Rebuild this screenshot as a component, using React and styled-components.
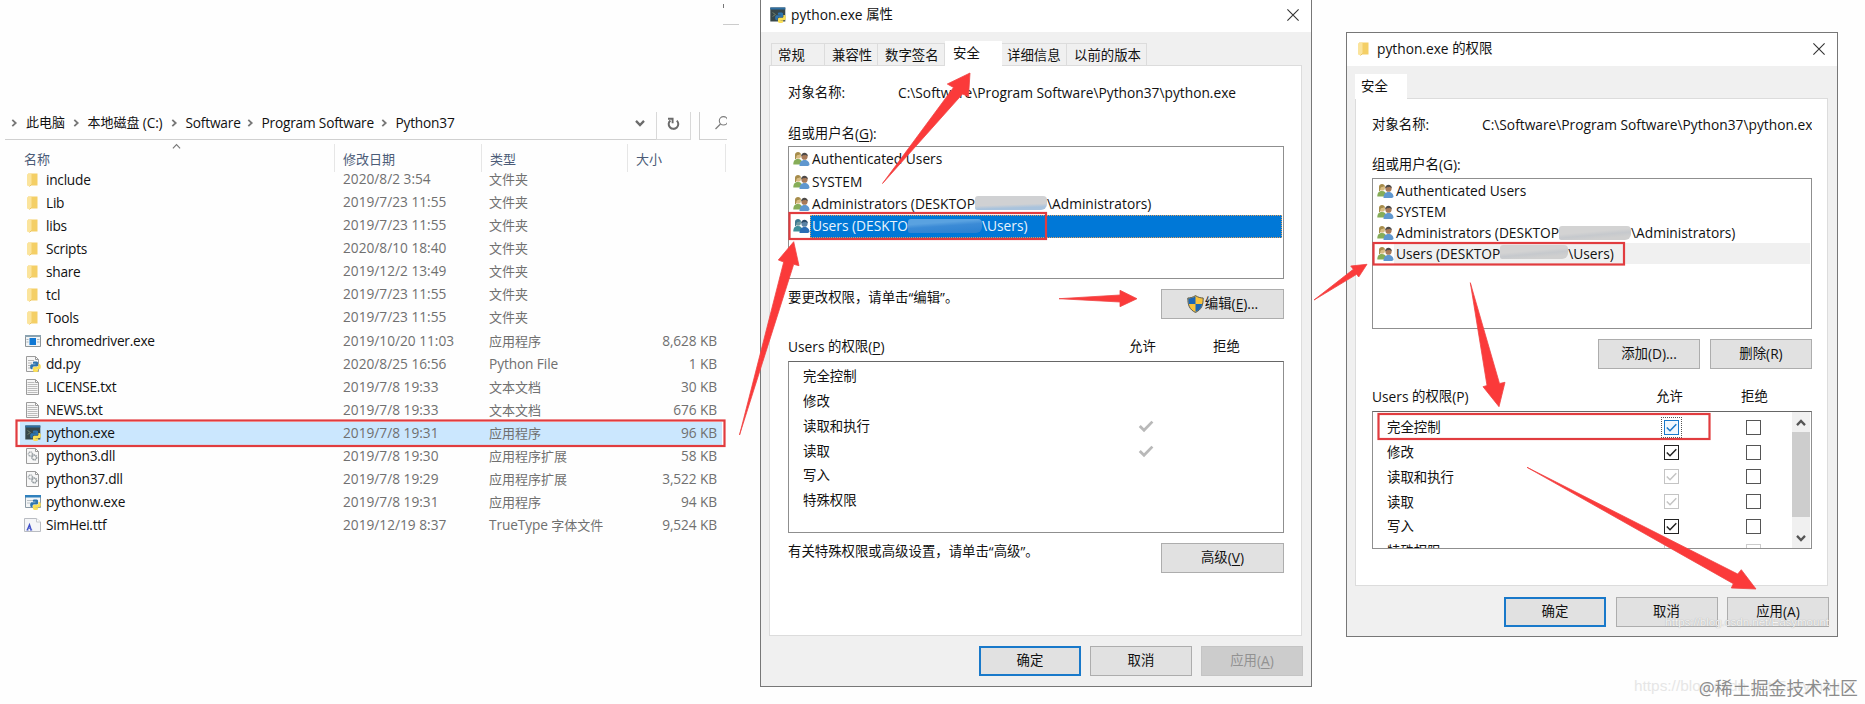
import React from "react";
import styled, { createGlobalStyle, css } from "styled-components";

const Global = createGlobalStyle`
  *, *::before, *::after { box-sizing: border-box; }
  body { margin: 0; background: #fff; }
`;

const Page = styled.main`
  position: relative;
  display: flex;
  align-items: flex-start;
  width: 1865px;
  height: 704px;
  overflow: hidden;
  background: #fefefe;
  color: #111;
  font-family: "Open Sans", "Noto Sans CJK SC", sans-serif;
  font-size: 13.7px;
`;

/* ---------- text ---------- */

const Line = styled.span`
  white-space: pre;
  letter-spacing: ${(p) => p.$ls ?? 0}px;
`;
const Cjk = styled.span`
  font-family: "Noto Sans CJK SC", sans-serif;
  font-size: ${(p) => p.$size}px;
  letter-spacing: 0;
  line-height: 0;
  vertical-align: ${(p) => p.$lift}px;
`;
const Key = styled.span`
  text-decoration: underline;
  text-underline-offset: 2px;
`;

/* Han text is set slightly smaller than Latin; "&X" underlines an access key. */
function Txt({ children, cjk = 13.4, ls, lift = 1 }) {
  return (
    <Line $ls={ls}>
      {children.split(/([\u2e80-\uffef]+|&\w)/).map((part, i) => {
        if (/^[\u2e80-\uffef]/.test(part)) return <Cjk key={i} $size={cjk} $lift={lift}>{part}</Cjk>;
        if (part.startsWith("&")) return <Key key={i}>{part[1]}</Key>;
        return part;
      })}
    </Line>
  );
}

/* ---------- icons ---------- */

const Svg = styled.svg`
  display: block;
  flex: none;
  overflow: ${(p) => (p.$clip ? "hidden" : "visible")};
`;

const SNAKE_TOP =
  "M14.25.18l.9.2.73.26.59.3.45.32.34.34.25.34.16.33.1.3.04.26.02.2-.01.13V8.5l-.05.63-.13.55-.21.46-.26.38-.3.31-.33.25-.35.19-.35.14-.33.1-.3.07-.26.04-.21.02H8.77l-.69.05-.59.14-.5.22-.41.27-.33.32-.27.35-.2.36-.15.37-.1.35-.07.32-.04.27-.02.21v3.06H3.17l-.21-.03-.28-.07-.32-.12-.35-.18-.36-.26-.36-.36-.35-.46-.32-.59-.28-.73-.21-.88-.14-1.05-.05-1.23.06-1.22.16-1.04.24-.87.32-.71.36-.57.4-.44.42-.33.42-.24.4-.16.36-.1.32-.05.24-.01h.16l.06.01h8.16v-.83H6.18l-.01-2.75-.02-.37.05-.34.11-.31.17-.28.25-.26.31-.23.38-.2.44-.18.51-.15.58-.12.64-.1.71-.06.77-.04.84-.02 1.27.05z";
const SNAKE_BOTTOM =
  "M21.1 6.11l.28.06.32.12.35.18.36.27.36.35.35.47.32.59.28.73.21.88.14 1.04.05 1.23-.06 1.23-.16 1.04-.24.86-.32.71-.36.57-.4.45-.42.33-.42.24-.4.16-.36.09-.32.05-.24.02-.16-.01h-8.22v.82h5.84l.01 2.76.02.36-.05.34-.11.31-.17.29-.25.25-.31.24-.38.2-.44.17-.51.15-.58.13-.64.09-.71.07-.77.04-.84.01-1.27-.04-1.07-.14-.9-.2-.73-.25-.59-.3-.45-.33-.34-.34-.25-.34-.16-.33-.1-.3-.04-.25-.02-.2.01-.13v-5.34l.05-.64.13-.54.21-.46.26-.38.3-.32.33-.24.35-.2.35-.14.33-.1.3-.06.26-.04.21-.02.13-.01h5.84l.69-.05.59-.14.5-.21.41-.28.33-.32.27-.35.2-.36.15-.36.1-.35.07-.32.04-.28.02-.21V6.07h2.09l.14.01z";

const Snake = () => (
  <g transform="translate(5.2 5.4) scale(.44)">
    <path d={SNAKE_TOP} fill="#2f74ae" />
    <path d={SNAKE_BOTTOM} fill="#fbdf55" />
  </g>
);
const Sheet = () => (
  <path d="M1.5.5h9l3 3v12h-12zM10.5.5v3h3" fill="#f7f7f7" stroke="#9b9b9b" />
);
const FolderIcon = () => (
  <Svg width="16" height="16" viewBox="0 0 16 16">
    <path d="M3 1.5h9.500v12H3z" fill="#f4cf66" />
    <path d="M2 2.200l4.500-.7v11L4.500 14.500 2 13.500z" fill="#fbe49c" />
    <path d="M6.500 12.500l-2 2" stroke="#e6bd55" strokeWidth=".8" />
  </Svg>
);
const ChromeDriverIcon = () => (
  <Svg width="16" height="16" viewBox="0 0 16 16">
    <path d="M.5 2.500h15v11H.5z" fill="#f2f4f5" stroke="#8c9499" />
    <path d="M0 2h16v2H0z" fill="#8aa2b0" />
    <path d="M4.500 5h6.500v7H4.500z" fill="#0f78d4" />
    <path d="M1.500 6.500h2M1.500 9h2M12 6.500h2.500M12 9h2.500" stroke="#a9b4bb" />
  </Svg>
);
const PyFileIcon = () => (
  <Svg width="16" height="16" viewBox="0 0 16 16">
    <Sheet />
    <path d="M3 4.500h6M3 7h4M3 9.500h3M3 12h3" stroke="#b5b5b5" />
    <Snake />
  </Svg>
);
const TextFileIcon = () => (
  <Svg width="16" height="16" viewBox="0 0 16 16">
    <Sheet />
    <path d="M2.500 3.500h7M2.500 5.500h10M2.500 7.500h10M2.500 9.500h10M2.500 11.500h10M2.500 13.500h10" stroke="#b4b4b4" strokeWidth=".9" />
  </Svg>
);
const PythonExeIcon = () => (
  <Svg width="16" height="16" viewBox="0 0 16 16">
    <path d="M.3.500h15v14H.3z" fill="#37474a" />
    <path d="M.3.500h15v2H.3z" fill="#2e6fa3" />
    <path d="M2.500 5.500l3 2-3 2" stroke="#6f7f6a" fill="none" />
    <Snake />
  </Svg>
);
const PythonwIcon = () => (
  <Svg width="16" height="16" viewBox="0 0 16 16">
    <path d="M.5 1.500h15v12H.5z" fill="#f3f5f6" stroke="#8b9aa5" />
    <path d="M0 1h16v2.500H0z" fill="#2f80bd" />
    <path d="M2 6.500h6M2 9h3" stroke="#b9c0c5" />
    <Snake />
  </Svg>
);
const DllIcon = () => (
  <Svg width="16" height="16" viewBox="0 0 16 16">
    <Sheet />
    <circle cx="5.500" cy="6" r="2" fill="none" stroke="#a3a9ad" strokeWidth="1.600" strokeDasharray="1.200 .5" />
    <circle cx="9.300" cy="9.500" r="2.300" fill="none" stroke="#8f979c" strokeWidth="1.700" strokeDasharray="1.300 .5" />
  </Svg>
);
const FontFileIcon = () => (
  <Svg width="18" height="16" viewBox="0 0 18 16">
    <path d="M.5 1.500h12l4 3.500v9.500H.5z" fill="#f5f6f8" stroke="#b9bcc2" />
    <path d="M12.500 1.500V5h4" fill="#fff" stroke="#c5c8cc" />
    <path d="M2.500 13h2M6 13h2.200M3.200 13L5.500 7.500 7.300 13M4 11.200h2.500" stroke="#4050c8" strokeWidth="1.200" fill="none" />
  </Svg>
);
const UsersIcon = ({ tint }) => (
  <Svg width="17" height="16" viewBox="0 0 17 16">
    <path d="M.3 13.500C.3 9.500 2 8 5 8s4.500 2 4.500 5.500z" fill={tint ? "#3f8f9a" : "#86ad58"} />
    <circle cx="5" cy="4.700" r="3" fill={tint ? "#6f99a0" : "#d9bd83"} />
    <path d="M2 8V4c0-4 6-4 6 0l-1-.8C6 4.500 4 3.500 3.500 5L3 8z" fill={tint ? "#3d7a90" : "#a68c4b"} />
    <path d="M6.500 15C6.500 11 8.500 9 11.500 9s5 2 5 5l-1.500 1z" fill={tint ? "#2a6db5" : "#5f97cf"} />
    <circle cx="11.500" cy="5.700" r="3.100" fill={tint ? "#5c83a5" : "#a87a58"} />
    <path d="M8.200 5.500c-.3-5 6.800-5 6.600 0-1-1.800-3.600-1-4.400-1.500z" fill={tint ? "#2b4a68" : "#4d4a48"} />
  </Svg>
);
const ShieldIcon = () => (
  <Svg width="17" height="18" viewBox="0 0 17 18">
    <path d="M8.500.6C6 2.300 3.500 3 .8 3c0 7 1.500 11.500 7.700 14.500C14.700 14.500 16.200 10 16.200 3 13.500 3 11 2.300 8.500.6z" fill="#f8c23c" stroke="#5b5b50" />
    <path d="M8.500 1.200C6.200 2.600 4 3.300 1.300 3.500c0 2 .1 3.900.5 5.400h6.700z" fill="#1c66b5" />
    <path d="M8.500 8.900h6.700c-.8 3.900-2.700 6.300-6.700 8z" fill="#1c66b5" />
  </Svg>
);
const CloseIcon = () => (
  <Svg width="12" height="12" viewBox="0 0 12 12">
    <path d="M.4.4l11.200 11.200M11.600.4L.4 11.600" stroke="#333" strokeWidth="1.100" />
  </Svg>
);
const Tick = ({ color, width = 1.500, size = 15 }) => (
  <Svg width={size} height={size} viewBox="0 0 15 15">
    <path d="M2.800 7.500l3.200 3.200 6.300-6.500" fill="none" stroke={color} strokeWidth={width} />
  </Svg>
);
const ChevronIcon = ({ dir = "right", size = 8, color = "#777", width = 1.800 }) => {
  const turn = { right: 0, down: 90, left: 180, up: 270 }[dir];
  return (
    <Svg width={size} height={size} viewBox="0 0 8 8">
      <path d="M2.300.8L5.700 4 2.300 7.200" transform={`rotate(${turn} 4 4)`} fill="none" stroke={color} strokeWidth={width} />
    </Svg>
  );
};
const RefreshIcon = () => (
  <Svg width="13" height="14" viewBox="0 0 13 14">
    <path d="M9.800 3.600A4.800 4.800 0 1 1 3.400 3.400" fill="none" stroke="#6b6b6b" strokeWidth="2" />
    <path d="M1 1.700h4.600V6.300" fill="none" stroke="#6b6b6b" strokeWidth="1.900" />
  </Svg>
);
const SearchIcon = () => (
  <Svg width="12" height="14" viewBox="0 0 12 14" $clip>
    <circle cx="8.500" cy="4.800" r="4.200" fill="none" stroke="#7d7d7d" strokeWidth="1.100" />
    <path d="M5.500 8L.5 13" stroke="#7d7d7d" strokeWidth="1.200" />
  </Svg>
);

/* ---------- file explorer ---------- */

const Explorer = styled.section`
  width: 760px;
  flex: none;
  padding-left: 5px;
`;
const WindowCorner = styled.div`
  width: 16px;
  height: 25px;
  margin: 0 0 87px 718px;
  border-bottom: 1px solid #ccc;
  &::before {
    content: "";
    display: block;
    width: 1px;
    height: 8px;
    border-bottom: 4px solid #777;
  }
`;
const AddressBar = styled.div`
  display: flex;
  height: 28px;
`;
const Crumbs = styled.div`
  display: flex;
  align-items: center;
  width: 651px;
  padding: 0 11px 5px 5px;
  border-bottom: 1px solid #d0d0d0;
  line-height: 20px;
`;
const Crumb = styled.div`
  display: flex;
  align-items: center;
  gap: 8px;
  width: ${(p) => p.$w}px;
`;
const DropArrow = styled.div`
  margin-left: auto;
`;
const AddressButton = styled.div`
  display: flex;
  align-items: center;
  justify-content: center;
  width: 35px;
  padding-bottom: 3px;
  border: solid #d9d9d9;
  border-width: 0 1px 1px;
`;
const SearchBox = styled.div`
  display: flex;
  justify-content: flex-end;
  width: 28px;
  margin-left: 8px;
  padding-top: 4px;
  border: solid #d0d0d0;
  border-width: 0 0 1px 1px;
`;
const HeaderRow = styled.div`
  display: grid;
  grid-template-columns: 311px 147px 146px 98px;
  height: 28.200px;
  padding-left: 19px;
`;
const HeaderCell = styled.div`
  position: relative;
  height: 28px;
  margin-top: 4px;
  border-right: 1px solid #e6e6e6;
  padding-left: ${(p) => (p.$first ? 0 : 8)}px;
  color: #4c5c78;
  line-height: 31px;
`;
const SortMark = styled.span`
  position: absolute;
  left: 148px;
  top: -2px;
`;
const FileRow = styled.div`
  display: grid;
  grid-template-columns: 323px 146px 1fr auto;
  width: 702px;
  height: 23.050px;
  margin-left: 15px;
  padding-right: 5px;
  line-height: 22px;
  color: #707070;
  background: ${(p) => (p.$on ? "#cbe7fe" : "none")};
`;
const FileName = styled.div`
  display: flex;
  align-items: center;
  gap: 5px;
  padding-left: 5px;
  color: #111;
`;
const IconSlot = styled.span`
  display: flex;
  width: 16px;
  flex: none;
  justify-content: center;
`;

const crumbs = [
  ["此电脑", 61.5],
  ["本地磁盘 (C:)", 98],
  ["Software", 76],
  ["Program Software", 134],
  ["Python37", 90],
];
const files = [
  [FolderIcon, "include", "2020/8/2 3:54", "文件夹", ""],
  [FolderIcon, "Lib", "2019/7/23 11:55", "文件夹", ""],
  [FolderIcon, "libs", "2019/7/23 11:55", "文件夹", ""],
  [FolderIcon, "Scripts", "2020/8/10 18:40", "文件夹", ""],
  [FolderIcon, "share", "2019/12/2 13:49", "文件夹", ""],
  [FolderIcon, "tcl", "2019/7/23 11:55", "文件夹", ""],
  [FolderIcon, "Tools", "2019/7/23 11:55", "文件夹", ""],
  [ChromeDriverIcon, "chromedriver.exe", "2019/10/20 11:03", "应用程序", "8,628 KB"],
  [PyFileIcon, "dd.py", "2020/8/25 16:56", "Python File", "1 KB"],
  [TextFileIcon, "LICENSE.txt", "2019/7/8 19:33", "文本文档", "30 KB"],
  [TextFileIcon, "NEWS.txt", "2019/7/8 19:33", "文本文档", "676 KB"],
  [PythonExeIcon, "python.exe", "2019/7/8 19:31", "应用程序", "96 KB"],
  [DllIcon, "python3.dll", "2019/7/8 19:30", "应用程序扩展", "58 KB"],
  [DllIcon, "python37.dll", "2019/7/8 19:29", "应用程序扩展", "3,522 KB"],
  [PythonwIcon, "pythonw.exe", "2019/7/8 19:31", "应用程序", "94 KB"],
  [FontFileIcon, "SimHei.ttf", "2019/12/19 8:37", "TrueType 字体文件", "9,524 KB"],
];

function FileExplorer() {
  return (
    <Explorer>
      <WindowCorner />
      <AddressBar>
        <Crumbs>
          {crumbs.map(([label, w]) => (
            <Crumb key={label} $w={w}>
              <ChevronIcon />
              <Txt cjk={13} ls={-0.2}>{label}</Txt>
            </Crumb>
          ))}
          <DropArrow><ChevronIcon dir="down" size={10} color="#6b6b6b" /></DropArrow>
        </Crumbs>
        <AddressButton><RefreshIcon /></AddressButton>
        <SearchBox><SearchIcon /></SearchBox>
      </AddressBar>
      <HeaderRow>
        <HeaderCell $first>
          <Txt cjk={13}>名称</Txt>
          <SortMark><ChevronIcon dir="up" size={9} width={1} /></SortMark>
        </HeaderCell>
        <HeaderCell><Txt cjk={13}>修改日期</Txt></HeaderCell>
        <HeaderCell><Txt cjk={13}>类型</Txt></HeaderCell>
        <HeaderCell><Txt cjk={13}>大小</Txt></HeaderCell>
      </HeaderRow>
      {files.map(([Icon, name, date, type, size]) => (
        <FileRow key={name} $on={name === "python.exe"}>
          <FileName>
            <IconSlot><Icon /></IconSlot>
            <Txt ls={-0.25}>{name}</Txt>
          </FileName>
          <Txt>{date}</Txt>
          <Txt cjk={13} lift={0} ls={-0.1}>{type}</Txt>
          <Txt ls={-0.1}>{size}</Txt>
        </FileRow>
      ))}
    </Explorer>
  );
}

/* ---------- dialogs ---------- */

const Dialog = styled.section`
  flex: none;
  width: ${(p) => p.$w}px;
  height: ${(p) => p.$h}px;
  margin-top: ${(p) => p.$top ?? 0}px;
  margin-left: ${(p) => p.$left ?? 0}px;
  border: 1px solid #777;
  border-top-width: ${(p) => (p.$top ? 1 : 0)}px;
  background: #f0f0f0;
  font-size: 13.750px;
`;
const TitleBar = styled.header`
  display: flex;
  align-items: center;
  height: ${(p) => p.$h}px;
  padding: 0 12px 2px 9px;
  background: #fff;
  line-height: 22px;
`;
const TitleText = styled.h1`
  flex: 1;
  margin: 0 0 0 ${(p) => p.$gap}px;
  font: inherit;
`;
const Tabs = styled.nav`
  display: flex;
  align-items: flex-end;
  height: ${(p) => p.$h}px;
  padding-left: ${(p) => p.$pad}px;
`;
const Tab = styled.div`
  width: ${(p) => p.$w}px;
  height: ${(p) => (p.$on ? 24 : 22)}px;
  padding-left: ${(p) => p.$pad}px;
  border: solid #dcdcdc;
  border-width: 1px 1px 0 ${(p) => (p.$first ? 1 : 0)}px;
  line-height: 23px;
  ${(p) => p.$on && css`
    position: relative;
    height: 25px;
    margin-bottom: -1px;
    background: #fff;
    border-color: #fff;
  `}
`;
const Pane = styled.div`
  width: ${(p) => p.$w}px;
  height: ${(p) => p.$h}px;
  margin-left: 8px;
  padding: ${(p) => p.$pad};
  border: 1px solid #dcdcdc;
  background: #fff;
`;
const ObjectRow = styled.div`
  display: flex;
  height: 24px;
  line-height: 24px;
  overflow: hidden;
`;
const ObjectLabel = styled.span`
  width: ${(p) => p.$w}px;
  flex: none;
`;
const FieldLabel = styled.div`
  height: ${(p) => p.$h}px;
  margin-top: ${(p) => p.$mt}px;
  line-height: 23px;
`;
const ListBox = styled.div`
  height: ${(p) => p.$h}px;
  padding: 1px 1px 0;
  border: 1px solid #8f8f8f;
`;
const Account = styled.div`
  display: flex;
  align-items: center;
  height: ${(p) => p.$h}px;
  padding-left: 3px;
`;
const AccountText = styled.div`
  display: flex;
  align-items: center;
  flex: 1;
  height: 100%;
  padding-left: 2px;
  background: ${(p) => p.$bg ?? "none"};
  color: ${(p) => p.$fg ?? "inherit"};
  line-height: 20px;
  outline: ${(p) => (p.$focus ? "1px dotted #e0a060" : "none")};
  outline-offset: -1px;
`;
const HiddenName = styled.span`
  flex: none;
  align-self: center;
  width: ${(p) => p.$w}px;
  height: 14px;
  margin: 0 0 ${(p) => p.$lift ?? 0}px;
  border-radius: 3px 4px 6px 2px;
  background: ${(p) => p.$fill};
`;
const Columns = styled.div`
  display: flex;
  height: 26px;
  margin-top: 16px;
  line-height: 23px;
`;
const Column = styled.span`
  width: ${(p) => p.$w}px;
`;
const HintRow = styled.div`
  display: flex;
  justify-content: space-between;
  height: 30px;
  margin-top: 10px;
  line-height: 18px;
`;
const ButtonRow = styled.div`
  display: flex;
  justify-content: flex-end;
  gap: ${(p) => p.$gap ?? 9}px;
  margin-top: ${(p) => p.$mt ?? 10}px;
  padding-right: ${(p) => p.$pr ?? 0}px;
`;
const Button = styled.button`
  display: flex;
  align-items: center;
  justify-content: center;
  gap: 1px;
  width: ${(p) => p.$w ?? 102}px;
  height: 30px;
  padding: 0;
  border: ${(p) => (p.$primary ? "2px solid #1979ca" : "1px solid #adadad")};
  background: #e1e1e1;
  color: inherit;
  font: inherit;
  line-height: 20px;
  &:disabled {
    border-color: #c4c4c4;
    background: #cccccc;
    color: #929292;
  }
`;
const PermissionBox = styled.div`
  display: flex;
  height: ${(p) => p.$h}px;
  padding-top: ${(p) => p.$pt}px;
  border: 1px solid #8f8f8f;
  border-top-color: #666;
  overflow: hidden;
`;
const PermissionList = styled.div`
  flex: 1;
`;
const Permission = styled.div`
  display: flex;
  align-items: center;
  height: 24.750px;
  padding-left: 14px;
  line-height: 22px;
`;
const PermissionName = styled.span`
  width: ${(p) => p.$w}px;
`;
const CheckSlot = styled.span`
  display: flex;
  width: 82px;
`;
const Check = styled.span`
  display: flex;
  align-items: center;
  justify-content: center;
  width: 15px;
  height: 15px;
  border: 1px solid ${(p) => p.$color};
  background: ${(p) => (p.$focus ? "#f2f8fe" : "#fff")};
  outline: ${(p) => (p.$focus ? "1px dotted #555" : "none")};
  outline-offset: 2px;
`;
const ScrollTrack = styled.div`
  display: flex;
  flex-direction: column;
  align-items: center;
  justify-content: space-between;
  width: 18px;
  margin: -3px 1px 0 0;
  padding: 6px 0 5px;
  background: #f0f0f0;
`;
const ScrollThumb = styled.div`
  width: 18px;
  height: 85px;
  margin-bottom: 12px;
  background: #cdcdcd;
`;

const GREY = "linear-gradient(175deg, #d3d3d3 0 42%, #c6c9cd 60%, #cfcfcf 80%)";
const GREY_BLUE = "linear-gradient(178deg, #d0d1d3 0 60%, #a9c3dd 80%)";
const BLUE = "linear-gradient(176deg, #5aa2e0 0 30%, #3c8bd6 50%, #2b80d0)";

const permissionNames = ["完全控制", "修改", "读取和执行", "读取", "写入", "特殊权限"];

function PropertiesDialog() {
  return (
    <Dialog $w={552} $h={687}>
      <TitleBar $h={32}>
        <PythonExeIcon />
        <TitleText $gap={5}><Txt>python.exe 属性</Txt></TitleText>
        <CloseIcon />
      </TitleBar>
      <Tabs $h={33} $pad={10}>
        <Tab $w={54} $pad={6} $first><Txt>常规</Txt></Tab>
        <Tab $w={53} $pad={7}><Txt>兼容性</Txt></Tab>
        <Tab $w={67} $pad={7}><Txt>数字签名</Txt></Tab>
        <Tab $w={57} $pad={8} $on><Txt>安全</Txt></Tab>
        <Tab $w={65} $pad={5}><Txt>详细信息</Txt></Tab>
        <Tab $w={80} $pad={7}><Txt>以前的版本</Txt></Tab>
      </Tabs>
      <Pane $w={533} $h={571} $pad="15px 17px 0 18px">
        <ObjectRow>
          <ObjectLabel $w={110}><Txt>对象名称:</Txt></ObjectLabel>
          <Txt>{"C:\\Software\\Program Software\\Python37\\python.exe"}</Txt>
        </ObjectRow>
        <FieldLabel $mt={17} $h={24}><Txt>组或用户名(&G):</Txt></FieldLabel>
        <ListBox $h={133}>
          <Account $h={22.400}><UsersIcon /><AccountText><Txt>Authenticated Users</Txt></AccountText></Account>
          <Account $h={22.400}><UsersIcon /><AccountText><Txt>SYSTEM</Txt></AccountText></Account>
          <Account $h={22.400}>
            <UsersIcon />
            <AccountText>
              <Txt>Administrators (DESKTOP</Txt>
              <HiddenName $w={72} $fill={GREY_BLUE} $lift={2} />
              <Txt>{"\\Administrators)"}</Txt>
            </AccountText>
          </Account>
          <Account $h={22.400}>
            <UsersIcon tint />
            <AccountText $bg="#0078d7" $fg="#e8f3fc" $focus>
              <Txt>Users (DESKTO</Txt>
              <HiddenName $w={74} $fill={BLUE} />
              <Txt>{"\\Users)"}</Txt>
            </AccountText>
          </Account>
        </ListBox>
        <HintRow>
          <Txt>要更改权限，请单击“编辑”。</Txt>
          <Button $w={123}><ShieldIcon /><Txt>编辑(&E)...</Txt></Button>
        </HintRow>
        <Columns>
          <Column $w={341}><Txt>Users 的权限(&P)</Txt></Column>
          <Column $w={84}><Txt>允许</Txt></Column>
          <Column><Txt>拒绝</Txt></Column>
        </Columns>
        <PermissionBox $h={172} $pt={2}>
          <PermissionList>
            {permissionNames.map((name, i) => (
              <Permission key={name}>
                <PermissionName $w={333}><Txt lift={0.5}>{name}</Txt></PermissionName>
                {(i === 2 || i === 3) && <Tick color="#b9b9b9" width={2.100} size={20} />}
              </Permission>
            ))}
          </PermissionList>
        </PermissionBox>
        <HintRow>
          <Txt>有关特殊权限或高级设置，请单击“高级”。</Txt>
          <Button $w={123}><Txt>高级(&V)</Txt></Button>
        </HintRow>
      </Pane>
      <ButtonRow $pr={8}>
        <Button $primary><Txt>确定</Txt></Button>
        <Button><Txt>取消</Txt></Button>
        <Button disabled><Txt>应用(&A)</Txt></Button>
      </ButtonRow>
    </Dialog>
  );
}

const allowColors = ["#1979ca", "#222", "#c4c4c4", "#c4c4c4", "#222", "#ccc"];

function PermissionsDialog() {
  return (
    <Dialog $w={492} $h={605} $top={32} $left={34}>
      <TitleBar $h={33}>
        <FolderIcon />
        <TitleText $gap={5}><Txt>python.exe 的权限</Txt></TitleText>
        <CloseIcon />
      </TitleBar>
      <Tabs $h={32} $pad={8}>
        <Tab $w={52} $pad={5} $on $first><Txt>安全</Txt></Tab>
      </Tabs>
      <Pane $w={473} $h={488} $pad="14px 15px 0 16px">
        <ObjectRow>
          <ObjectLabel $w={110}><Txt>对象名称:</Txt></ObjectLabel>
          <Txt>{"C:\\Software\\Program Software\\Python37\\python.exe"}</Txt>
        </ObjectRow>
        <FieldLabel $mt={16} $h={25}><Txt>组或用户名(G):</Txt></FieldLabel>
        <ListBox $h={151}>
          <Account $h={21.100}><UsersIcon /><AccountText><Txt>Authenticated Users</Txt></AccountText></Account>
          <Account $h={21.100}><UsersIcon /><AccountText><Txt>SYSTEM</Txt></AccountText></Account>
          <Account $h={21.100}>
            <UsersIcon />
            <AccountText>
              <Txt>Administrators (DESKTOP</Txt>
              <HiddenName $w={72} $fill={GREY} />
              <Txt>{"\\Administrators)"}</Txt>
            </AccountText>
          </Account>
          <Account $h={21.100}>
            <UsersIcon />
            <AccountText $bg="#f0f0f0">
              <Txt>Users (DESKTOP</Txt>
              <HiddenName $w={68} $fill={GREY} $lift={4} />
              <Txt>{"\\Users)"}</Txt>
            </AccountText>
          </Account>
        </ListBox>
        <ButtonRow $gap={10}>
          <Button><Txt>添加(D)...</Txt></Button>
          <Button><Txt>删除(R)</Txt></Button>
        </ButtonRow>
        <Columns>
          <Column $w={284}><Txt>Users 的权限(P)</Txt></Column>
          <Column $w={85}><Txt>允许</Txt></Column>
          <Column><Txt>拒绝</Txt></Column>
        </Columns>
        <PermissionBox $h={138} $pt={3}>
          <PermissionList>
            {permissionNames.map((name, i) => (
              <Permission key={name}>
                <PermissionName $w={277}><Txt lift={0.5}>{name}</Txt></PermissionName>
                <CheckSlot>
                  <Check $color={allowColors[i]} $focus={i === 0}>
                    {i < 5 && <Tick color={allowColors[i]} />}
                  </Check>
                </CheckSlot>
                <Check $color={i === 5 ? "#ccc" : "#555"} />
              </Permission>
            ))}
          </PermissionList>
          <ScrollTrack>
            <ChevronIcon dir="up" size={10} color="#555" />
            <ScrollThumb />
            <ChevronIcon dir="down" size={10} color="#555" />
          </ScrollTrack>
        </PermissionBox>
      </Pane>
      <ButtonRow $pr={8} $mt={11} $gap={9.500}>
        <Button $primary><Txt>确定</Txt></Button>
        <Button><Txt>取消</Txt></Button>
        <Button><Txt>应用(A)</Txt></Button>
      </ButtonRow>
    </Dialog>
  );
}

/* ---------- annotations over the windows ---------- */

const Overlay = styled.svg`
  position: absolute;
  inset: 0;
  pointer-events: none;
`;
const Watermark = styled.div`
  position: absolute;
  right: ${(p) => p.$right}px;
  bottom: ${(p) => p.$bottom}px;
  color: ${(p) => p.$color};
  font-size: ${(p) => p.$size}px;
  line-height: 24px;
  font-family: ${(p) => p.$font};
  white-space: nowrap;
  text-shadow: ${(p) => p.$shadow ?? "none"};
`;

const arrows = [
  "739.500,435 783.700,262 778.300,260 793.700,241.700 799,265.700 793.700,264.300",
  "882.500,183.500 953.500,87.500 947.300,84 970,73 968.500,96.500 962.500,94",
  "1059,298.700 1120,295 1120,290.300 1137,298.700 1120,306.700 1120,302",
  "1314,300 1353.300,269.300 1350.700,266 1367,264.300 1358.700,277 1356.700,274.300",
  "1470.300,282.700 1487,385.500 1483,386.700 1499,406.700 1505,382.300 1499.500,383.500",
  "1527,467.300 1737.700,574 1741.300,569.700 1756,589 1731.300,588 1733.300,583.700",
];
const marks = [
  [16.500, 420.500, 708, 25.500],
  [789.500, 213, 256.500, 26],
  [1373.500, 243, 250.500, 21.500],
  [1378.500, 414, 331, 25],
];

export default function App() {
  return (
    <Page>
      <Global />
      <FileExplorer />
      <PropertiesDialog />
      <PermissionsDialog />
      <Overlay width="1865" height="704" viewBox="0 0 1865 704">
        {marks.map(([x, y, w, h]) => (
          <rect key={x} x={x} y={y} width={w} height={h} fill="none" stroke="#e13c3f" strokeWidth="2.200" />
        ))}
        {arrows.map((points) => (
          <polygon key={points} points={points} fill="#fb3a3a" stroke="#f04545" strokeWidth=".8" strokeLinejoin="round" />
        ))}
      </Overlay>
      <Watermark $right={36} $bottom={70} $color="#f4f4f4" $size={11.500} $font='"Liberation Sans", sans-serif' $shadow="0 0 1px #999">
        https://blog.csdn.net/Easymount
      </Watermark>
      <Watermark $right={12} $bottom={6} $color="#e6e6e6" $size={15.400} $font='"Liberation Sans", sans-serif'>
        https://blog.csdn.net/Easymount
      </Watermark>
      <Watermark $right={7} $bottom={4} $color="#8c8c8c" $size={17.900} $font='"Open Sans", "Noto Sans CJK SC", sans-serif' $shadow="0 0 2px #fff">
        @稀土掘金技术社区
      </Watermark>
    </Page>
  );
}
